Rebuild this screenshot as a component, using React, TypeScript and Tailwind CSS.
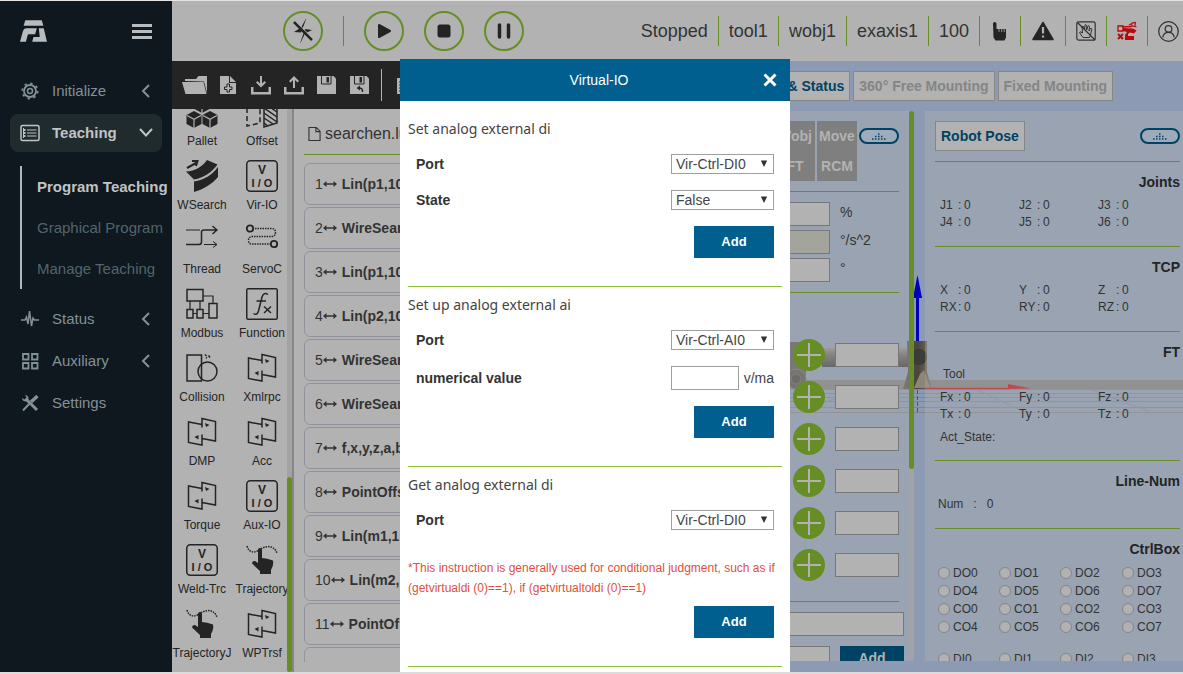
import React from "react";

type Kids = { children?: React.ReactNode };

/* ---------- icons ---------- */

function Glyph({ children, box = "0 0 32 32", className = "size-8" }: Kids & { box?: string; className?: string }) {
  return (
    <svg viewBox={box} className={`shrink-0 ${className}`} fill="none" stroke="currentColor" strokeWidth="1.5" aria-hidden="true">
      {children}
    </svg>
  );
}

const Cube = ({ x, y }: { x: number; y: number }) => (
  <g transform={`translate(${x} ${y})`}>
    <path d="M8 0 15.5 4V13L8 17 .5 13V4Z" fill="currentColor" stroke="none" />
    <path d="M1 4.5 8 8.2 15 4.5M8 8.2V17" stroke="#b2b2b2" strokeWidth="1.2" />
  </g>
);

const Pallet = () => (
  <Glyph>
    <Cube x={8} y={0} />
    <Cube x={0} y={15} />
    <Cube x={16} y={15} />
  </Glyph>
);

const Offset = () => (
  <Glyph>
    <path d="M1 4V30L14 27V3L1 5" strokeDasharray="5 3" />
    <path d="M18 3H31V27L18 31Z" />
    <path d="M18 7 31 16M18 12 31 21M18 17 31 26M18 22 27 28M18 27 22 30M22 4 31 11" />
  </Glyph>
);

const WSearch = () => (
  <Glyph>
    <path d="M1 8 11 2.500M6 1H11.500L10 6" strokeWidth="2" />
    <path d="M0 11.500C9 11 16 7 21 0L31.500 4.500C26 12 18 18 8 19.500Z" fill="currentColor" stroke="none" />
    <path d="M8 21.500C18 20 26 15 32 7V17C26 24 18 29 8 32Z" fill="currentColor" stroke="none" />
  </Glyph>
);

const VIO = () => (
  <Glyph>
    <rect x=".75" y=".75" width="30.5" height="30.5" rx="3.5" />
    <g fill="currentColor" stroke="none" fontFamily="Liberation Sans, Arial, sans-serif" fontWeight="700" textAnchor="middle">
      <text x="16" y="14" fontSize="12">V</text>
      <text x="16" y="27" fontSize="11">I / O</text>
    </g>
  </Glyph>
);

const Thread = () => (
  <Glyph>
    <path d="M0 6H14" strokeWidth="1" />
    <path d="M0 20.500H13Q15.500 20.500 15.500 18V8Q15.500 6 18 6H31M26.500 2 31 6 26.500 10" />
    <path d="M18 20.500H31M27 17.500 31 20.500 27 23.500" strokeWidth="1" />
  </Glyph>
);

const ServoC = () => (
  <Glyph>
    <circle cx="4" cy="4.500" r="3.200" strokeWidth="1.800" />
    <circle cx="28" cy="20" r="3.200" strokeWidth="1.800" />
    <path d="M9 4.500H26Q29.500 5 29.500 8.500T26 12.500H6Q2.500 13 2.500 16.500T6 20H24" strokeDasharray="1.500 1" />
  </Glyph>
);

const Modbus = () => (
  <Glyph>
    <path d="M1 1.500H17V13H1ZM1 21.500H7V30H1ZM11 21.500H17V30H11ZM23 15.500H31V30H23Z" />
    <path d="M4 13V21M14 13V21M17 8H27V15M7 25.500H11M17 25.500H23" strokeWidth="1.200" />
  </Glyph>
);

const Func = () => (
  <Glyph>
    <rect x=".75" y=".75" width="30.5" height="30.5" rx="1.5" />
    <path d="M22 6.500Q18 3.500 16 9L12.500 23Q11 28 7.500 25.500M10.500 13H20" />
    <path d="M18 18.500 25 25M25 18.500 18 25" />
  </Glyph>
);

const Collision = () => (
  <Glyph>
    <path d="M1 3H15.500V29H1Z" />
    <circle cx="21.500" cy="19.500" r="9.500" />
    <path d="M19 2.500 20.500 4M22.500 3.500 24 5.500M20 5.500 21 6" />
  </Glyph>
);

const Panels = () => (
  <Glyph>
    <path d="M16 11.500V2.500L29.500 5.500V25L16 22.500M16 8.500 2.500 6V26.500L16 29V18.500" />
    <path d="M19 7 23.500 9 20 11ZM12.500 19 8.500 21 12.500 23.500Z" fill="currentColor" stroke="none" />
  </Glyph>
);

const Trajectory = () => (
  <Glyph>
    <path d="M1 2C3 9 9 9 13 6S27-1 31 9" strokeDasharray="1.500 1" />
    <path d="M12 6Q12 4 14 4T16 6V14Q21 14 27 16.500 28 21 25 26V30H14V27L6 19.500Q6 16.500 9 17L12 19Z" fill="currentColor" stroke="none" />
  </Glyph>
);

const Chevron = ({ open }: { open?: boolean }) => (
  <Glyph box="0 0 16 16" className="size-4">
    <path d={open ? "M2 4 8 10.500 14 4" : "M11 2 5 8 11 14"} strokeWidth="2" />
  </Glyph>
);

/* ---------- sidebar ---------- */

const initIcon = (
  <Glyph box="0 0 20 20" className="size-5">
    <circle cx="10" cy="10" r="6" strokeWidth="1.800" />
    <circle cx="10" cy="10" r="2.500" />
    <circle cx="10" cy="10" r="7.700" strokeWidth="1.800" strokeDasharray="2.400 3.650" />
  </Glyph>
);
const teachIcon = (
  <Glyph box="0 0 20 20" className="size-5">
    <rect x="1" y="2.500" width="18" height="15" rx="1.500" />
    <path d="M4 7H5.500M4 10H5.500M4 13H5.500" strokeWidth="2" />
    <path d="M7 7H16.500M7 10H16.500M7 13H16.500M3.500 5V15" strokeWidth="1" />
  </Glyph>
);
const statusIcon = (
  <Glyph box="0 0 20 20" className="size-5">
    <path d="M1 11H5L6.500 8 8 15 9.500 2 11.500 17 13 9 14.500 11H19" />
  </Glyph>
);
const auxIcon = (
  <Glyph box="0 0 20 20" className="size-5">
    <path d="M3 3H8.500V8.500H3ZM12 3H17.500V8.500H12ZM3 12H8.500V17.500H3ZM12 12H17.500V17.500H12Z" strokeWidth="1.800" />
  </Glyph>
);
const toolsIcon = (
  <Glyph box="0 0 20 20" className="size-5">
    <path d="M6 6 17 17" strokeWidth="3" />
    <path d="M5 2Q9 2.500 8.500 7L7 8.500Q2.500 9 2 5L4.500 6.500 6.500 4.500Z" fill="currentColor" stroke="none" />
    <path d="M17.500 3 11 9" strokeWidth="3.500" />
    <path d="M9.500 10.500 3 17.500" strokeWidth="2" />
  </Glyph>
);

function NavItem({ icon, label, state }: { icon: React.ReactNode; label: string; state?: "open" | "closed" }) {
  const open = state === "open";
  return (
    <button
      className={`flex h-[38px] w-full items-center gap-3 rounded-lg pr-2 pl-2.5 text-left text-[15px] ${
        open ? "bg-[#202b2e] font-bold text-[#c0c3c4]" : "text-[#829098]"
      }`}
    >
      {icon}
      <span className="flex-1">{label}</span>
      {state && <Chevron open={open} />}
    </button>
  );
}

function Sidebar() {
  return (
    <aside className="flex w-[172px] shrink-0 flex-col bg-[#0e181e]">
      <div className="flex h-[60px] items-center justify-between pr-5 pl-5">
        <svg viewBox="0 0 82 66" className="h-[22px] w-[27px] fill-[#b8bcbe]" role="img" aria-label="Logo">
          <path d="M16 0H66L71 17H11Z" />
          <path d="M0 66 9 33Q11 25 19 25H51L46 43H27Q24 43 23 47L18 66Z" />
          <path d="M57 25H72L82 66H37L41 51H60Z" />
        </svg>
        <button aria-label="Toggle menu" className="flex flex-col gap-[3px]">
          <span className="h-[3px] w-5 bg-[#b8bcbe]" />
          <span className="h-[3px] w-5 bg-[#b8bcbe]" />
          <span className="h-[3px] w-5 bg-[#b8bcbe]" />
        </button>
      </div>
      <nav className="flex flex-col gap-1 px-2.5 pt-[11px]">
        <NavItem icon={initIcon} label="Initialize" state="closed" />
        <NavItem icon={teachIcon} label="Teaching" state="open" />
        <div className="mt-2.5 mb-[7px] ml-2.5 flex flex-col border-l-2 border-[#b2b8ba] pl-[15px] text-[15px] whitespace-nowrap text-[#53646c]">
          <a href="#program" className="leading-[41px] font-bold text-[#c0c3c4]">Program Teaching</a>
          <a href="#graphical" className="leading-[41px]">Graphical Program</a>
          <a href="#manage" className="leading-[41px]">Manage Teaching</a>
        </div>
        <NavItem icon={statusIcon} label="Status" state="closed" />
        <NavItem icon={auxIcon} label="Auxiliary" state="closed" />
        <NavItem icon={toolsIcon} label="Settings" />
      </nav>
    </aside>
  );
}

/* ---------- header ---------- */

function Round({ label, children }: Kids & { label: string }) {
  return (
    <button aria-label={label} className="flex size-10 items-center justify-center rounded-full border-2 border-[#678e25] text-[#242424]">
      <Glyph box="0 0 24 24" className="size-6">{children}</Glyph>
    </button>
  );
}

const cell = "flex h-[30px] items-center border-r border-[#678e25] px-2.5";

function Header() {
  return (
    <header className="flex h-[60px] shrink-0 items-center justify-between bg-[#b2b2b2] pr-1 pl-[111px]">
      <div className="flex items-center gap-5">
        <Round label="Servo">
          <path d="M16 -2 10 8.500 3 13 10 13.500ZM8.500 26 14 14.500 21 11 14 10Z" fill="currentColor" stroke="none" />
          <path d="M3 3 21 21" strokeWidth="2.500" />
          <path d="M5 2.500 22.500 20" stroke="#b2b2b2" strokeWidth="1" />
        </Round>
        <span className="h-[30px] w-px bg-[#678e25]" />
        <Round label="Start">
          <path d="M7 6 18 12 7 18Z" fill="currentColor" strokeWidth="2" strokeLinejoin="round" />
        </Round>
        <Round label="Stop">
          <rect x="5.500" y="5.500" width="13" height="13" rx="2.500" fill="currentColor" stroke="none" />
        </Round>
        <Round label="Pause">
          <path d="M7.500 6V18M16.500 6V18" strokeWidth="3.500" strokeLinecap="round" />
        </Round>
      </div>
      <div className="flex items-center text-[18px] text-[#333]">
        <span className={cell}>Stopped</span>
        <span className={cell}>tool1</span>
        <span className={cell}>wobj1</span>
        <span className={cell}>exaxis1</span>
        <span className={cell}>100</span>
        <span className={cell}>
          <Glyph box="0 0 20 20" className="size-5">
            <path d="M3 2.500Q3 1 4.700 1T6.500 2.500V8H16V16.500L14.500 19.500H5.500L3.500 16.500Z" fill="#242424" stroke="none" />
            <path d="M9 7V11M11.700 7V11M14.200 7V11" stroke="#b2b2b2" strokeWidth=".8" />
          </Glyph>
        </span>
        <span className={cell}>
          <Glyph box="0 0 24 24" className="size-6">
            <path d="M12 3.500 22 20.500H2Z" fill="#242424" stroke="#242424" strokeLinejoin="round" />
            <path d="M12 8V14.500M12 16.500V18.500" stroke="#b2b2b2" strokeWidth="2.200" />
          </Glyph>
        </span>
        <span className={cell}>
          <Glyph box="0 0 20 20" className="size-5">
            <rect x=".8" y=".8" width="18.400" height="18.400" rx="2" strokeWidth="1.200" />
            <path d="M7 16.500Q5 14 3.500 11.500 4.500 10 6.500 12L6 6Q7 4.500 8 6L8.500 9 9 4Q10 3 10.700 4.500V9L12 5Q13 4 13.500 5.500L13 10 14.500 7.500Q16 7 15.800 8.500L14.500 14 13.500 16.500Z" strokeWidth="1" />
            <path d="M1 1 19 19" strokeWidth="1.300" />
          </Glyph>
        </span>
        <span className={cell}>
          <Glyph box="0 0 20 20" className="size-5 text-[#b80a0a]">
            <path d="M1 5H6V10H1ZM5 6 15 5.500M15 2.500 12 4M15.500 4.500 19.500 6M15 2.500 19 1.500" strokeWidth="1.300" />
            <path d="M6 7 16 7.500 19.500 9.500 17 12.500 13 11.500 11 13V15H17V19H8V14L10 11 6 10Z" fill="currentColor" stroke="none" />
            <path d="M1 13 6 18M6 13 1 18" strokeWidth="2" />
            <circle cx="16.500" cy="3.500" r="1.800" fill="#b2b2b2" strokeWidth="1.100" />
          </Glyph>
        </span>
        <span className="pl-2.5">
          <Glyph box="0 0 20 20" className="size-[21px]">
            <circle cx="10" cy="10" r="9.300" strokeWidth="1.200" />
            <circle cx="10" cy="7.500" r="3.200" strokeWidth="1.200" />
            <path d="M4.500 15.500Q5.500 10.800 10 10.800T15.500 15.500" strokeWidth="1.200" />
          </Glyph>
        </span>
      </div>
    </header>
  );
}

/* ---------- program area ---------- */

const save = "M0 1H16.500L19 3.500V19H0Z";
const files: { label: string; art: React.ReactNode; wide?: boolean }[] = [
  {
    label: "Open",
    wide: true,
    art: (
      <>
        <path d="M3 6V4H14L16.500 1H25V18L22 6.500Z" />
        <path d="M0 7H21.500L24.500 19H3.500Z" />
      </>
    ),
  },
  {
    label: "New",
    art: (
      <>
        <path d="M2 1H11V8H18V19H2ZM12 1 18 7H12Z" />
        <path d="M9 9H11.500V12H14V14.500H11.500V17H9V14.500H6.500V12H9Z" fill="#b2b2b2" stroke="#242424" />
      </>
    ),
  },
  { label: "Import", art: <path d="M0 12H2.500V17H17.500V12H20V19.500H0ZM9 1H11V8.500L13.500 6 15 7.500 10 12.500 5 7.500 6.500 6 9 8.500Z" /> },
  { label: "Export", art: <path d="M0 12H2.500V17H17.500V12H20V19.500H0ZM9 13H11V5L13.500 7.500 15 6 10 1 5 6 6.500 7.500 9 5Z" /> },
  {
    label: "Save",
    art: (
      <>
        <path d={save} />
        <path d="M4.500 1V9H14V1" fill="none" stroke="#242424" />
        <path d="M9.500 2H12V7.500H9.500Z" fill="#242424" />
      </>
    ),
  },
  {
    label: "Save as",
    art: (
      <>
        <path d={save} />
        <path d="M4.500 1V9H14V1" fill="none" stroke="#242424" />
        <path d="M9.500 2H12V7.500H9.500ZM6.500 13 10 10.500V15.500Z" fill="#242424" />
        <path d="M9 13Q13 13 12.500 17" fill="none" stroke="#242424" strokeWidth="1.500" />
      </>
    ),
  },
];

const commands: [string, React.FC][] = [
  ["Pallet", Pallet],
  ["Offset", Offset],
  ["WSearch", WSearch],
  ["Vir-IO", VIO],
  ["Thread", Thread],
  ["ServoC", ServoC],
  ["Modbus", Modbus],
  ["Function", Func],
  ["Collision", Collision],
  ["Xmlrpc", Panels],
  ["DMP", Panels],
  ["Acc", Panels],
  ["Torque", Panels],
  ["Aux-IO", VIO],
  ["Weld-Trc", VIO],
  ["Trajectory", Trajectory],
  ["TrajectoryJ", Trajectory],
  ["WPTrsf", Panels],
];

const lines = [
  "Lin(p1,10",
  "WireSear",
  "Lin(p1,10",
  "Lin(p2,10",
  "WireSear",
  "WireSear",
  "f,x,y,z,a,b",
  "PointOffs",
  "Lin(m1,1",
  "Lin(m2,",
  "PointOf",
];

function Program() {
  return (
    <section className="flex min-w-0 flex-1 flex-col bg-[#b2b2b2]">
      <div className="flex h-12 shrink-0 items-center bg-[#242424] pl-1.5">
        {files.map((f) => (
          <button key={f.label} aria-label={f.label} className="flex w-[33px] justify-center">
            <svg viewBox={f.wide ? "0 0 26 20" : "0 0 20 20"} className={`h-5 fill-[#b2b2b2] ${f.wide ? "w-[26px]" : "w-5"}`}>
              {f.art}
            </svg>
          </button>
        ))}
        <span className="ml-[5px] h-8 w-px bg-[#b2b2b2]" />
        <button aria-label="Copy" className="ml-[15px]">
          <svg viewBox="0 0 20 20" className="size-5">
            <path d="M0 3H16V19H0Z" fill="#b2b2b2" />
            <path d="M2 7H13M2 10H13M2 13H13M2 16H13" stroke="#242424" />
          </svg>
        </button>
      </div>
      <div className="flex min-h-0 flex-1">
        <div className="flex h-full w-[115px] shrink-0 flex-col justify-end overflow-hidden">
          <div className="grid shrink-0 grid-cols-[60px_60px]">
            {commands.map(([label, Icon]) => (
              <button key={label} className="flex h-16 flex-col items-center text-[12px] leading-[26px] whitespace-nowrap text-[#242424]">
                <Icon />
                {label}
              </button>
            ))}
          </div>
        </div>
        <div className="flex w-[5px] shrink-0 flex-col justify-end rounded-full bg-[#a3a3a3]">
          <span className="h-[195px] rounded-full bg-[#678e25]" />
        </div>
        <div className="flex min-w-0 flex-1 flex-col border-l-2 border-[#868686] pr-2.5 pb-2.5 pl-2.5">
          <div className="flex h-[46px] shrink-0 items-end border-b border-[#678e25] pb-2 text-[16px] leading-6 text-[#333]">
            <div className="flex items-center gap-1 pl-1">
              <Glyph box="0 0 14 16" className="h-4 w-[13px]">
                <path d="M1 1H9L13 5V15H1ZM8.500 1V5.500H13" strokeWidth="1.200" />
              </Glyph>
              searchen.lua
            </div>
          </div>
          <ol className="mt-2 flex min-h-0 flex-1 flex-col gap-0.5 overflow-hidden">
            {lines.map((text, i) => (
              <li key={i} className="flex h-[42px] shrink-0 items-center rounded-md border border-[#92929c] pl-2.5 text-[14px] text-[#333]">
                <span>{i + 1}</span>
                <svg viewBox="0 0 14 8" className="mr-[5px] h-2 w-3.5 fill-[#333]">
                  <path d="M0 4 3.500 1V3.200H10.500V1L14 4 10.500 7V4.800H3.500V7Z" />
                </svg>
                <b>{text}</b>
              </li>
            ))}
            <li className="h-[42px] shrink-0 rounded-md border border-[#92929c]" />
          </ol>
        </div>
      </div>
    </section>
  );
}

/* ---------- robot area ---------- */

function Scene() {
  return (
    <svg viewBox="640 61 543 611" className="absolute top-0 right-0 h-[611px] w-[543px]" aria-hidden="true">
      <defs>
        <linearGradient id="tube" x1="0" x2="0" y1="0" y2="1">
          <stop offset="0" stopColor="#96908a" />
          <stop offset=".4" stopColor="#6a6865" />
          <stop offset="1" stopColor="#3d4143" />
        </linearGradient>
        <linearGradient id="base" x1="0" x2="1" y1="0" y2="0">
          <stop offset="0" stopColor="#5d5850" />
          <stop offset=".5" stopColor="#48443f" />
          <stop offset="1" stopColor="#7b7365" />
        </linearGradient>
      </defs>
      <rect x="640" y="380" width="543" height="9" fill="#828081" />
      <g stroke="#858488" strokeWidth="1">
        <path d="M640 389.500H1183M640 393.500H1183M640 397.500H1183M640 401.500H1183M640 407.500H1183M640 412.500H1183" />
        <path d="M975 389 1025 412M1090 389 1150 412M860 389 800 412" opacity=".6" />
      </g>
      <rect x="785" y="342" width="21" height="40" fill="#5b5a56" />
      <circle cx="796" cy="379" r="10" fill="#57544e" stroke="#77736a" />
      <circle cx="796" cy="379" r="5" fill="#4a4843" stroke="#6d6a62" />
      <path d="M822 348H908V367H822Z" fill="url(#tube)" />
      <path d="M907 341H927V372L932 389H903L908 372Z" fill="url(#base)" />
      <circle cx="919" cy="357" r="8" fill="#3b3b39" />
      <path d="M920 374 924 370 930 388H914Z" fill="#8d8576" />
      <path d="M917.500 297V341" stroke="#0000b8" strokeWidth="3" />
      <path d="M917.500 275 922 298H913Z" fill="#0000b8" />
      <path d="M917.500 390V413" stroke="#555" strokeDasharray="4 2" />
      <path d="M925 388.500H1010" stroke="#c4151b" strokeWidth="1.500" />
      <path d="M1008 384 1031 388.500 1008 389Z" fill="#c4151b" />
    </svg>
  );
}

function Pill({ label }: { label: string }) {
  return (
    <button aria-label={label} className="flex h-4 w-10 items-center justify-center rounded-full border-2 border-[#004263] bg-[#9dabba]">
      <svg viewBox="0 0 14 8" className="h-2 w-3.5">
        <path d="M0 7H14M3 4.500H11M6 2H8.500" stroke="#004263" strokeWidth="1.500" strokeDasharray="1.500 1.500" />
      </svg>
    </button>
  );
}

const Tab = ({ children, on }: Kids & { on?: boolean }) => (
  <button
    className={`h-[30px] shrink-0 border border-[#868686] bg-[#b2b2b2] px-[5px] text-[14px] font-bold whitespace-nowrap ${on ? "text-[#004263]" : "text-[#858585]"}`}
  >
    {children}
  </button>
);

const field = "h-6 min-w-0 border border-[#777]";
const greyTab = "w-10 bg-[#7f7f7f] text-center text-[14px] leading-[30px] font-bold text-[#b2b2b2]";

function Controls() {
  return (
    <div className="flex min-w-0 flex-1">
      <div className="flex min-w-0 flex-1 flex-col overflow-hidden bg-[#b2b2b2]/35 pt-2.5">
        <div className="flex flex-col pr-2.5">
          <div className="flex justify-end gap-0.5 pb-2.5">
            <div className="flex flex-col">
              <button className={greyTab}>Wobj</button>
              <button className={greyTab}>FT</button>
            </div>
            <div className="flex flex-col">
              <button className={greyTab}>Move</button>
              <button className={greyTab}>RCM</button>
            </div>
            <div className="pt-[7px]">
              <Pill label="Collapse controls" />
            </div>
          </div>
          <div className="flex flex-col items-end gap-1 border-y border-[#678e25] py-2.5 text-[14px] leading-5 text-[#333]">
            {["%", "°/s^2", "°"].map((unit) => (
              <label key={unit} className="flex h-6 gap-2.5">
                <input className={`${field} w-20 ${unit === "°/s^2" ? "bg-[#a3a59c]" : "bg-[#b2b2b2]"}`} disabled={unit === "°/s^2"} />
                <span className="w-[59px]">{unit}</span>
              </label>
            ))}
          </div>
          <div className="flex flex-col gap-2.5 border-b border-[#678e25] pt-[46px] pb-5">
            {[1, 2, 3, 4, 5, 6].map((n) => (
              <div key={n} className="flex items-center justify-end gap-2.5">
                <button aria-label={`Increase joint ${n}`} className="size-8 rounded-full bg-[#678e25] text-[#b2b2b2]">
                  <Glyph>
                    <path d="M16 4V28M4 16H28" strokeWidth="2" />
                  </Glyph>
                </button>
                <input aria-label={`Joint ${n}`} className={`${field} w-16 bg-[#b2b2b2]`} />
              </div>
            ))}
          </div>
        </div>
        <div className="flex flex-col gap-2.5 pt-2.5 pr-[5px]">
          <input aria-label="Point note" className={`${field} w-full bg-[#b2b2b2]`} />
          <div className="flex gap-2.5">
            <input aria-label="Point name" className={`${field} flex-1 bg-[#b2b2b2]`} />
            <button className="h-6 w-16 bg-[#004263] text-[14px] font-bold text-[#b2b2b2]">Add</button>
          </div>
        </div>
      </div>
      <div className="w-[5px] shrink-0 rounded-full bg-[#a3a3a3]">
        <div className="h-[358px] rounded-full bg-[#678e25]" />
      </div>
    </div>
  );
}

function Values({ names }: { names: string[] }) {
  return (
    <dl className="grid grid-cols-[79px_79px_79px] pl-[5px] leading-[17px]">
      {names.map((n) => (
        <div key={n} className="flex">
          <dt className="w-[18px]">{n}</dt>
          <dd className="flex">
            <span className="w-1.5">:</span>0
          </dd>
        </div>
      ))}
    </dl>
  );
}

const Block = ({ title, children }: Kids & { title: string }) => (
  <section className="shrink-0 border-t border-[#678e25] pt-2.5">
    <h3 className="mb-1 text-right text-[14px] leading-5 font-bold text-[#242424]">{title}</h3>
    {children}
  </section>
);

function Bits({ names }: { names: string[] }) {
  return (
    <div className="grid grid-cols-[61px_61px_62px_61px] pl-[3px] leading-[18px]">
      {names.map((n) => (
        <label key={n} className="flex items-center gap-[3px]">
          <input type="radio" className="size-3 appearance-none rounded-full border border-[#858585] bg-[#b2b2b2]" />
          {n}
        </label>
      ))}
    </div>
  );
}

function Pose() {
  return (
    <div className="flex w-[258px] shrink-0 flex-col overflow-hidden bg-[#b2b2b2]/35 pt-2.5 pr-[3px] pl-2.5 text-[12px] text-[#333]">
      <div className="flex items-center justify-between pb-2.5">
        <Tab on>Robot Pose</Tab>
        <Pill label="Collapse pose" />
      </div>
      <Block title="Joints">
        <div className="pt-px pb-[15px]">
          <Values names={["J1", "J2", "J3", "J4", "J5", "J6"]} />
        </div>
      </Block>
      <Block title="TCP">
        <div className="pt-px pb-[15px]">
          <Values names={["X", "Y", "Z", "RX", "RY", "RZ"]} />
        </div>
      </Block>
      <Block title="FT">
        <div className="flex flex-col gap-1.5 pb-3.5 leading-[17px]">
          <span className="pl-2">Tool</span>
          <Values names={["Fx", "Fy", "Fz", "Tx", "Ty", "Tz"]} />
          <span className="pl-[5px]">Act_State:</span>
        </div>
      </Block>
      <Block title="Line-Num">
        <p className="flex gap-2.5 pt-px pb-[15px] pl-[3px] leading-[17px]">
          <span>Num</span>
          <span>:</span>
          <span>0</span>
        </p>
      </Block>
      <Block title="CtrlBox">
        <div className="flex flex-col gap-3.5 pt-px">
          <Bits names={["DO0", "DO1", "DO2", "DO3", "DO4", "DO5", "DO6", "DO7", "CO0", "CO1", "CO2", "CO3", "CO4", "CO5", "CO6", "CO7"]} />
          <Bits names={["DI0", "DI1", "DI2", "DI3"]} />
        </div>
      </Block>
    </div>
  );
}

function Robot() {
  return (
    <section className="relative flex w-[543px] shrink-0 overflow-hidden bg-[#8c9bb3]">
      <Scene />
      <div className="relative flex min-w-0 flex-1 flex-col">
        <div className="flex h-[50px] shrink-0 items-center justify-end gap-[3px] pr-[70px]">
          <Tab on>Robot &amp; Status</Tab>
          <Tab>360° Free Mounting</Tab>
          <Tab>Fixed Mounting</Tab>
        </div>
        <div className="flex min-h-0 flex-1 gap-[11px] pb-[11px]">
          <Controls />
          <Pose />
        </div>
      </div>
    </section>
  );
}

/* ---------- dialog ---------- */

const titleFont = "font-['Noto_Sans','Open_Sans',sans-serif]";

function Row({ id, label, children }: Kids & { id: string; label: string }) {
  return (
    <div className="flex min-h-9 items-center justify-between px-2">
      <label htmlFor={id} className="font-bold text-[#333]">{label}</label>
      {children}
    </div>
  );
}

function Choice({ id, value }: { id: string; value: string }) {
  return (
    <div className="relative h-5 w-[103px]">
      <select id={id} className="size-full appearance-none border border-[#a0a0a0] bg-white pl-1 text-[14px] leading-4 text-[#444]">
        <option>{value}</option>
      </select>
      <svg viewBox="0 0 8 8" className="pointer-events-none absolute top-1.5 right-1.5 size-2 fill-[#333]">
        <path d="M.8 .5H7.200L4 7Z" />
      </svg>
    </div>
  );
}

function Part({ title, children }: Kids & { title: string }) {
  return (
    <section className="flex shrink-0 flex-col border-b border-[#8fbf35] pt-2 pb-7">
      <h3 className={`mb-[7px] text-[14px] leading-5 text-[#444] ${titleFont}`}>{title}</h3>
      {children}
      <button className="mt-2 mr-2 h-8 w-20 self-end bg-[#005f8e] text-[13px] font-bold text-white">Add</button>
    </section>
  );
}

function Dialog() {
  return (
    <div role="dialog" aria-label="Virtual-IO" className="absolute top-[58px] bottom-0 left-[400px] flex w-[390px] flex-col overflow-hidden bg-white text-[14px]">
      <div className="flex h-[42px] shrink-0 items-center bg-[#005f8e] pl-12 text-white">
        <h2 className="flex-1 text-center">Virtual-IO</h2>
        <button aria-label="Close" className="flex w-10 justify-center">
          <Glyph box="0 0 14 14" className="size-3.5">
            <path d="M1.500 1.500 12.500 12.500M12.500 1.500 1.500 12.500" strokeWidth="3" />
          </Glyph>
        </button>
      </div>
      <div className="flex flex-col px-2 pt-2.5">
        <Part title="Set analog external di">
          <Row id="di-port" label="Port">
            <Choice id="di-port" value="Vir-Ctrl-DI0" />
          </Row>
          <Row id="di-state" label="State">
            <Choice id="di-state" value="False" />
          </Row>
        </Part>
        <Part title="Set up analog external ai">
          <Row id="ai-port" label="Port">
            <Choice id="ai-port" value="Vir-Ctrl-AI0" />
          </Row>
          <div className="flex flex-col py-0.5">
            <Row id="ai-value" label="numerical value">
              <span className="flex w-[103px] items-center justify-between text-[#444]">
                <input id="ai-value" className="h-6 w-[68px] border border-[#a0a0a0]" />
                v/ma
              </span>
            </Row>
          </div>
        </Part>
        <Part title="Get analog external di">
          <Row id="get-port" label="Port">
            <Choice id="get-port" value="Vir-Ctrl-DI0" />
          </Row>
          <p className="mt-5 text-[12px] leading-5 text-[#e0503f]">
            *This instruction is generally used for conditional judgment, such as if (getvirtualdi (0)==1), if (getvirtualtoldi (0)==1)
          </p>
        </Part>
      </div>
    </div>
  );
}

export default function App() {
  return (
    <div className="relative flex h-screen overflow-hidden border-t border-b-2 border-t-[#e4e4e4] border-b-[#dcdcdc] font-['Liberation_Sans',Arial,sans-serif]">
      <Sidebar />
      <div className="flex min-w-0 flex-1 flex-col">
        <Header />
        <main className="flex min-h-0 flex-1">
          <Program />
          <Robot />
        </main>
      </div>
      <Dialog />
    </div>
  );
}
